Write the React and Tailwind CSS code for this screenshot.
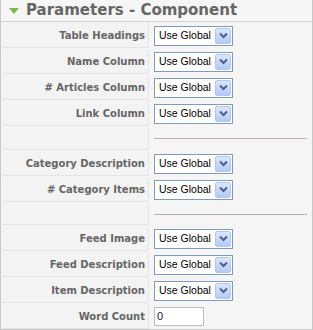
const rows = [
  { label: "Table Headings", type: "select" },
  { label: "Name Column", type: "select" },
  { label: "# Articles Column", type: "select" },
  { label: "Link Column", type: "select" },
  { type: "spacer", h: "h-[23px]" },
  { label: "Category Description", type: "select" },
  { label: "# Category Items", type: "select" },
  { type: "spacer", h: "h-[22px]" },
  { label: "Feed Image", type: "select" },
  { label: "Feed Description", type: "select" },
  { label: "Item Description", type: "select" },
  { label: "Word Count", type: "input" },
];

function FakeSelect() {
  return (
    <div className="flex h-[20px] w-[79px] items-center border border-[#7f9db9] bg-white pl-[4px] pr-px">
      <span className="flex-1 whitespace-nowrap text-[10.5px] text-black">Use Global</span>
      <span className="flex h-[16px] w-[16px] shrink-0 items-center justify-center rounded-[2px] border border-[#b4c7f3] bg-gradient-to-b from-[#dbe6fe] to-[#b5c9f8]">
        <svg width="9" height="7" viewBox="0 0 9 7">
          <path d="M1 1.5 L4.5 5 L8 1.5" fill="none" stroke="#4d6185" strokeWidth="2" />
        </svg>
      </span>
    </div>
  );
}

export default function App() {
  return (
    <div className="w-[313px] h-[330px] bg-[#f5f5f5] border-x border-b border-[#c8c8c8] font-['Liberation_Sans',Arial,sans-serif]">
      <div className="flex h-[22px] items-center gap-[7px] border-b border-[#d2d2d2] bg-[#f6f6f6] pl-[8px]">
        <svg width="10" height="6" viewBox="0 0 10 6">
          <polygon points="0,0 10,0 5,6" fill="#7cba4a" />
        </svg>
        <span className="whitespace-nowrap font-['DejaVu_Sans',sans-serif] text-[15px] font-bold text-[#666]">Parameters - Component</span>
      </div>
      <div className="pl-px">
        {rows.map((r, i) =>
          r.type === "spacer" ? (
            <div key={i} className={`flex ${r.h} mt-px`}>
              <div className="w-[147px] border-r border-b border-[#e4e4e4] bg-[#f3f3f3]" />
              <div className="flex flex-1 items-center pl-[5px] pr-[5px]">
                <div className="h-px w-full bg-[#b9b4a3]" />
              </div>
            </div>
          ) : (
            <div key={i} className="flex h-[25px] mt-px">
              <div className="flex w-[147px] items-center justify-end whitespace-nowrap border-r border-b border-[#e4e4e4] bg-[#f3f3f3] pr-[3px] font-['DejaVu_Sans',sans-serif] text-[10px] font-bold text-[#666]">
                {r.label}
              </div>
              <div className="flex flex-1 items-center pl-[5px]">
                {r.type === "select" ? (
                  <FakeSelect />
                ) : (
                  <div className="flex h-[19px] w-[50px] items-center border border-[#bdbdbd] bg-white pl-[2px] text-[11px] text-[#1a1a40]">
                    0
                  </div>
                )}
              </div>
            </div>
          )
        )}
      </div>
    </div>
  );
}
